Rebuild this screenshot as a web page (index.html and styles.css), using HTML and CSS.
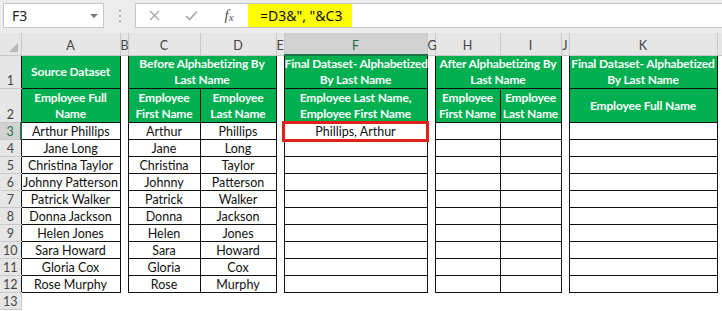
FILE: index.html
```html
<!DOCTYPE html>
<html lang="en">

<head>
  <meta charset="UTF-8">
  <title>Alphabetize by last name</title>
  <link rel="stylesheet" href="styles.css">
</head>

<body>
  <!-- formula bar -->
  <div class="formula-bar">
    <div class="name-box">F3 <span class="caret"></span></div>
    <div class="grip"><span></span></div>
    <div class="fx-box">
      <div class="fx-btn">
        <svg width="11" height="11" viewBox="0 0 11 11"><path d="M1 1 L10 10 M10 1 L1 10" stroke="#a6a6a6" stroke-width="1.4" fill="none"/></svg>
      </div>
      <div class="fx-btn">
        <svg width="13" height="11" viewBox="0 0 13 11"><path d="M1 6 L4.5 9.5 L12 1.5" stroke="#a6a6a6" stroke-width="1.6" fill="none"/></svg>
      </div>
      <div class="fx-btn fx-label">f<span>x</span></div>
      <div class="formula">=D3&amp;", "&amp;C3</div>
    </div>
  </div>

  <table class="sheet">
    <colgroup>
      <col class="w-hd"><col class="w-a"><col class="w-gap"><col class="w-c"><col class="w-d"><col class="w-gap"><col class="w-f"><col class="w-gap"><col class="w-h"><col class="w-i"><col class="w-gap"><col class="w-k"><col class="w-l">
    </colgroup>

    <tr class="col-heads">
      <th class="corner"><span class="tri"></span></th>
      <th>A</th><th>B</th><th>C</th><th>D</th><th>E</th>
      <th class="sel">F</th>
      <th>G</th><th>H</th><th>I</th><th>J</th><th>K</th><th></th>
    </tr>

    <tr class="r-1">
      <th class="rh">1</th>
      <td class="hd">Source Dataset</td>
      <td></td>
      <td class="hd" colspan="2">Before Alphabetizing By<br>Last Name</td>
      <td></td>
      <td class="hd">Final Dataset- Alphabetized<br>By Last Name</td>
      <td></td>
      <td class="hd" colspan="2">After Alphabetizing By<br>Last Name</td>
      <td></td>
      <td class="hd">Final Dataset- Alphabetized<br>By Last Name</td>
      <td></td>
    </tr>

    <tr class="r-2">
      <th class="rh">2</th>
      <td class="hd">Employee Full<br>Name</td>
      <td></td>
      <td class="hd">Employee<br>First Name</td>
      <td class="hd">Employee<br>Last Name</td>
      <td></td>
      <td class="hd">Employee Last Name,<br>Employee First Name</td>
      <td></td>
      <td class="hd">Employee<br>First Name</td>
      <td class="hd">Employee<br>Last Name</td>
      <td></td>
      <td class="hd">Employee Full Name</td>
      <td></td>
    </tr>

    <tr class="r-d">
      <th class="rh rh-sel">3</th>
      <td class="b">Arthur Phillips</td><td></td>
      <td class="b">Arthur</td><td class="b">Phillips</td><td></td>
      <td class="b active">Phillips, Arthur</td><td></td>
      <td class="b"></td><td class="b"></td><td></td>
      <td class="b"></td><td></td>
    </tr>
    <tr class="r-d">
      <th class="rh">4</th>
      <td class="b">Jane Long</td><td></td>
      <td class="b">Jane</td><td class="b">Long</td><td></td>
      <td class="b"></td><td></td>
      <td class="b"></td><td class="b"></td><td></td>
      <td class="b"></td><td></td>
    </tr>
    <tr class="r-d">
      <th class="rh">5</th>
      <td class="b">Christina Taylor</td><td></td>
      <td class="b">Christina</td><td class="b">Taylor</td><td></td>
      <td class="b"></td><td></td>
      <td class="b"></td><td class="b"></td><td></td>
      <td class="b"></td><td></td>
    </tr>
    <tr class="r-d">
      <th class="rh">6</th>
      <td class="b">Johnny Patterson</td><td></td>
      <td class="b">Johnny</td><td class="b">Patterson</td><td></td>
      <td class="b"></td><td></td>
      <td class="b"></td><td class="b"></td><td></td>
      <td class="b"></td><td></td>
    </tr>
    <tr class="r-d">
      <th class="rh">7</th>
      <td class="b">Patrick Walker</td><td></td>
      <td class="b">Patrick</td><td class="b">Walker</td><td></td>
      <td class="b"></td><td></td>
      <td class="b"></td><td class="b"></td><td></td>
      <td class="b"></td><td></td>
    </tr>
    <tr class="r-d">
      <th class="rh">8</th>
      <td class="b">Donna Jackson</td><td></td>
      <td class="b">Donna</td><td class="b">Jackson</td><td></td>
      <td class="b"></td><td></td>
      <td class="b"></td><td class="b"></td><td></td>
      <td class="b"></td><td></td>
    </tr>
    <tr class="r-d">
      <th class="rh">9</th>
      <td class="b">Helen Jones</td><td></td>
      <td class="b">Helen</td><td class="b">Jones</td><td></td>
      <td class="b"></td><td></td>
      <td class="b"></td><td class="b"></td><td></td>
      <td class="b"></td><td></td>
    </tr>
    <tr class="r-d">
      <th class="rh">10</th>
      <td class="b">Sara Howard</td><td></td>
      <td class="b">Sara</td><td class="b">Howard</td><td></td>
      <td class="b"></td><td></td>
      <td class="b"></td><td class="b"></td><td></td>
      <td class="b"></td><td></td>
    </tr>
    <tr class="r-d">
      <th class="rh">11</th>
      <td class="b">Gloria Cox</td><td></td>
      <td class="b">Gloria</td><td class="b">Cox</td><td></td>
      <td class="b"></td><td></td>
      <td class="b"></td><td class="b"></td><td></td>
      <td class="b"></td><td></td>
    </tr>
    <tr class="r-d">
      <th class="rh">12</th>
      <td class="b">Rose Murphy</td><td></td>
      <td class="b">Rose</td><td class="b">Murphy</td><td></td>
      <td class="b"></td><td></td>
      <td class="b"></td><td class="b"></td><td></td>
      <td class="b"></td><td></td>
    </tr>

    <!-- empty rows below the data -->
    <tr class="r-d">
      <th class="rh rh-edge">13</th>
      <td></td><td></td><td></td><td></td><td></td><td></td><td></td><td></td><td></td><td></td><td></td><td></td>
    </tr>
  </table>
</body>

</html>
```

FILE: styles.css
```css
* {
  box-sizing: border-box;
  margin: 0;
  padding: 0;
}

body {
  width: 722px;
  height: 311px;
  overflow: hidden;
  background: #fff;
  font-family: Lato, 'Liberation Sans', sans-serif;
}

/* 公式列 ------------------------------ */
.formula-bar {
  height: 33px;
  display: flex;
  align-items: flex-start;
  padding: 3px 0 0 3px;
  background: #ececec;
}

.name-box {
  width: 101px;
  height: 25px;
  display: flex;
  align-items: center;
  justify-content: space-between;
  padding: 0 5px 0 8px;
  background: #fff;
  border: 1px solid #c6c6c6;
  font-family: 'Noto Sans', sans-serif;
  font-size: 14px;
  color: #222;
}

.caret {
  width: 0;
  height: 0;
  border-left: 4px solid transparent;
  border-right: 4px solid transparent;
  border-top: 4px solid #7a7a7a;
}

.grip {
  width: 31px;
  height: 25px;
  display: flex;
  align-items: center;
  justify-content: center;
}

.grip span {
  width: 2px;
  height: 12px;
  background: repeating-linear-gradient(#b0b0b0 0 2px, transparent 2px 5px);
}

.fx-box {
  flex: 1;
  height: 25px;
  display: flex;
  align-items: center;
  background: #fff;
  border: 1px solid #c6c6c6;
  border-right: none;
}

.fx-btn {
  width: 37px;
  height: 23px;
  display: flex;
  align-items: center;
  justify-content: center;
}

.fx-label {
  width: 38px;
  font-family: 'Liberation Serif', serif;
  font-style: italic;
  font-size: 15px;
  color: #555;
}

.fx-label span {
  font-size: 11px;
  position: relative;
  top: 1px;
}

.formula {
  width: 104px;
  height: 23px;
  padding-left: 12px;
  line-height: 23px;
  background: #ffff00;
  font-family: 'Noto Sans', sans-serif;
  font-size: 14px;
  color: #111;
}

/* 工作表 ------------------------------ */
.sheet {
  table-layout: fixed;
  border-collapse: collapse;
  width: 741px;
  font-size: 12.5px;
}

.w-hd { width: 21px; }
.w-a { width: 99px; }
.w-gap { width: 8px; }
.w-c { width: 72px; }
.w-d { width: 76px; }
.w-f { width: 143px; }
.w-h { width: 65px; }
.w-i { width: 61px; }
.w-k { width: 148px; }
.w-l { width: 24px; }

.col-heads th {
  height: 22px;
  padding-top: 4px;
  line-height: 14px;
  background: #e6e6e6;
  border-right: 1px solid #c9c9c9;
  border-bottom: 1px solid #c9c9c9;
  font-weight: 400;
  font-size: 12.5px;
  color: #444;
  text-align: center;
  vertical-align: middle;
}

.col-heads th.sel {
  background: #d2d2d2;
  color: #217346;
  border-bottom: 2px solid #217346;
}

.corner {
  position: relative;
}

.tri {
  position: absolute;
  right: 3px;
  bottom: 3px;
  width: 0;
  height: 0;
  border-left: 9px solid transparent;
  border-bottom: 9px solid #b9b9b9;
}

.rh {
  background: #e6e6e6;
  border-bottom: 1px solid #c9c9c9;
  font-weight: 400;
  font-size: 12.5px;
  color: #444;
  text-align: center;
  vertical-align: bottom;
  line-height: 15px;
}

.rh-sel {
  background: #d2d2d2;
  color: #217346;
  border-right: 2px solid #217346;
}

.rh-edge {
  border-right: 1px solid #c9c9c9;
}

.r-1 { height: 33px; }
.r-2 { height: 34px; }
.r-d { height: 17px; }

td {
  padding: 0;
  text-align: center;
  vertical-align: middle;
  white-space: nowrap;
  line-height: 15px;
  color: #111;
}

td.hd {
  background: #00b050;
  border: 1px solid #111;
  color: #fff;
  font-weight: 700;
  font-size: 12px;
  letter-spacing: -0.15px;
  line-height: 16px;
}

td.b {
  border: 1px solid #111;
}

/* 選取的儲存格 F3 */
td.active {
  outline: 3px solid #e3211c;
  outline-offset: -1px;
}
```
